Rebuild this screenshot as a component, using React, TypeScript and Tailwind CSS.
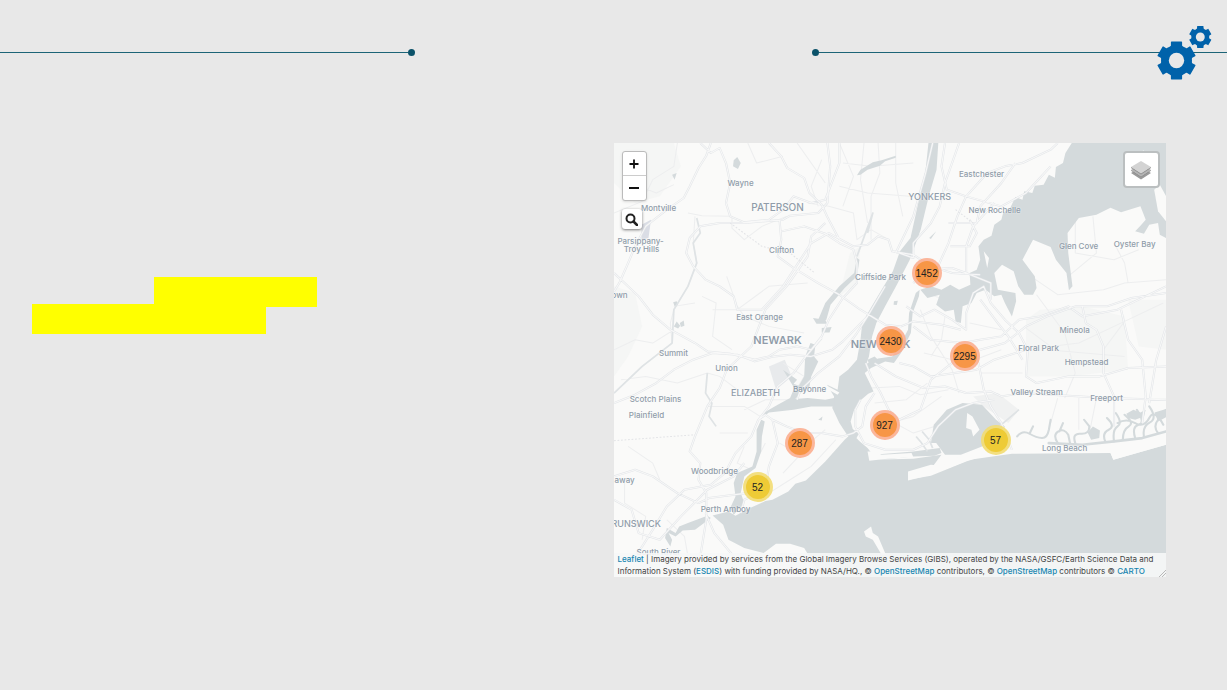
import React from "react";

type Label = { text: string; x: number; y: number; size: "sm" | "md" | "lg" | "xl"; edge?: boolean };
type Cluster = { count: number; x: number; y: number };

const MAP_W = 552;
const MAP_H = 434;

const labels: Label[] = [
  { text: "Wayne", x: 127, y: 40, size: "sm" },
  { text: "Montville", x: 45, y: 65, size: "sm" },
  { text: "PATERSON", x: 164, y: 64, size: "lg" },
  { text: "Parsippany-", x: 27, y: 98, size: "sm" },
  { text: "Troy Hills", x: 28, y: 106, size: "sm" },
  { text: "Clifton", x: 168, y: 107, size: "sm" },
  { text: "Eastchester", x: 368, y: 31, size: "sm" },
  { text: "YONKERS", x: 316, y: 53, size: "md" },
  { text: "New Rochelle", x: 381, y: 67, size: "sm" },
  { text: "Glen Cove", x: 465, y: 103, size: "sm" },
  { text: "Oyster Bay", x: 521, y: 101, size: "sm" },
  { text: "Cliffside Park", x: 267, y: 134, size: "sm" },
  { text: "own", x: -2, y: 152, size: "sm", edge: true },
  { text: "East Orange", x: 146, y: 174, size: "sm" },
  { text: "NEWARK", x: 164, y: 197, size: "xl" },
  { text: "NEW YORK", x: 267, y: 201, size: "xl" },
  { text: "Summit", x: 60, y: 210, size: "sm" },
  { text: "Union", x: 113, y: 225, size: "sm" },
  { text: "ELIZABETH", x: 142, y: 249, size: "md" },
  { text: "Bayonne", x: 196, y: 246, size: "sm" },
  { text: "Scotch Plains", x: 42, y: 256, size: "sm" },
  { text: "Plainfield", x: 33, y: 272, size: "sm" },
  { text: "Mineola", x: 461, y: 187, size: "sm" },
  { text: "Floral Park", x: 425, y: 205, size: "sm" },
  { text: "Hempstead", x: 473, y: 219, size: "sm" },
  { text: "Valley Stream", x: 423, y: 249, size: "sm" },
  { text: "Freeport", x: 493, y: 255, size: "sm" },
  { text: "Long Beach", x: 451, y: 305, size: "sm" },
  { text: "Woodbridge", x: 101, y: 328, size: "sm" },
  { text: "away", x: 1, y: 337, size: "sm", edge: true },
  { text: "Perth Amboy", x: 112, y: 366, size: "sm" },
  { text: "RUNSWICK", x: -2, y: 380, size: "md", edge: true },
  { text: "South River", x: 45, y: 409, size: "sm" },
];

const clusters: Cluster[] = [
  { count: 1452, x: 313, y: 130 },
  { count: 2430, x: 277, y: 198 },
  { count: 2295, x: 351, y: 213 },
  { count: 927, x: 271, y: 282 },
  { count: 287, x: 186, y: 300 },
  { count: 57, x: 382, y: 297 },
  { count: 52, x: 144, y: 344 },
];

const labelSize = {
  sm: "text-[8px] font-medium",
  md: "text-[9px] font-medium",
  lg: "text-[10px] font-medium",
  xl: "text-[11px] font-semibold",
};

const place = (x: number, y: number) => ({
  left: `${(x / MAP_W) * 100}%`,
  top: `${(y / MAP_H) * 100}%`,
});

const highways = [
  "M275 0L262 38L240 75L215 130L198 165L150 200L90 250L60 310L40 360L15 420L0 445",
  "M245 0L275 30L300 15L318 60L330 120L318 180L330 220L370 238L440 230L480 200L510 160L560 180L600 170L640 60L640 0",
  "M440 0L475 40L492 75L540 105L555 150L590 185L605 220L640 290",
  "M606 0L614 70L606 180L580 210L500 218L480 230L370 240L300 240L245 250L215 285L205 330L225 370L260 410L300 430L340 460L350 500L420 500L480 430L560 300L610 270L680 310L720 305L750 280L780 290L790 325L850 335L900 370L960 390L1040 395",
  "M470 230L475 290L465 340L510 375L580 420L640 455L700 500L770 545L815 550L850 535L930 545L985 560",
  "M475 265L540 250L600 272L640 300L680 320L690 360L690 420L650 465L610 530L590 580L560 620L520 610L470 620L440 640L400 650L330 632L265 625L230 600L160 560L110 515L70 460L0 390",
  "M0 780L60 755L120 720L170 680L225 650L280 630L350 635L400 655L455 640L500 635L560 640L620 620L650 595L720 520L770 430",
  "M590 585L545 640L510 690L465 730L440 790L410 830L390 880L345 930L315 990L275 1025L200 1040L150 1090L110 1160L80 1210L60 1240",
  "M245 1240L262 1130L262 1050L240 1010L245 960L215 925L230 880L265 790L300 735L320 680L390 610L430 500L490 430L550 340L560 280L600 240",
  "M0 1000L60 980L110 1000L180 1050L240 1080L270 1065L380 1050",
  "M280 1240L350 1310M260 1110L285 1170L340 1240",
  "M0 1070L50 1100L70 1170L130 1190L190 1120L265 1040L340 1000L370 960",
  "M410 830L430 815L450 830L490 850L540 870L590 870L650 880L680 870L705 850L715 790L740 750",
  "M450 830L465 900L440 970L430 1040L370 1070L360 1110",
  "M520 770L530 740L580 690L640 640L690 570L720 520",
  "M700 770L685 800L685 850L710 900L770 920L850 920L890 900L920 850L970 800L1020 780L1080 770",
  "M715 660L730 700L755 745L780 800L810 830L870 800L900 710L960 660L1000 640L1040 620L1110 600L1170 550L1230 520L1310 490L1400 490L1470 465L1568 450",
  "M740 660L800 700L880 735L940 730L1000 750L1070 745L1100 760L1160 750L1240 755L1400 765L1568 770",
  "M810 330L850 345L850 300L900 240L925 190L940 120L960 60L980 0",
  "M850 550L900 590L990 600L1040 590L1100 580L1150 530L1210 520L1290 490L1330 520L1430 500L1568 430",
  "M830 490L870 520L910 500L960 530L1000 560L1000 510L1020 450L1050 430L1070 480L1110 530L1150 570L1175 620L1170 700L1200 720L1290 700L1380 700L1460 675L1568 670",
  "M850 420L880 380L960 375L1000 390L1070 420L1070 470",
  "M860 420L920 370L950 300L975 220L1000 160L1060 90L1110 70L1160 60L1240 20L1260 0",
  "M905 0L885 90L850 220L800 330",
  "M940 0L930 70L945 140L1000 160L1100 190L1170 150L1240 70",
  "M950 240L1030 240L1040 190L1100 120L1140 60",
  "M955 310L1010 310L1030 270L1010 230",
  "M1000 390L1000 310L1020 250L1080 180",
  "M1330 490L1340 540L1370 560L1390 610L1390 690L1420 760L1420 850",
  "M1440 500L1460 590L1500 650L1510 760L1500 840",
  "M1568 550L1540 650L1520 780",
  "M1000 600L1035 660L1050 740L1070 790L1100 840L1130 920",
  "M1170 620L1080 650L1030 680L900 700L850 670L810 660",
  "M1040 470L1090 540L1120 580L1160 650",
];

const minorRoads = [
  "M50 120L120 150L170 125M0 210L80 175L110 110L170 70L180 0",
  "M210 210L250 218L335 220L335 255L370 290L420 250L490 220",
  "M230 220L225 300L235 360L210 430L170 500L160 540L165 600L80 670L0 750",
  "M550 180L610 190L680 210L690 290L730 260L780 290",
  "M640 0L680 100L650 190M710 0L700 110L720 240",
  "M320 400L350 490L370 520L440 550L540 570",
  "M250 460L290 480L280 580L335 620M280 500L350 500L440 430L550 420",
  "M265 790L370 790L415 820M170 490L230 480",
  "M20 710L90 700L180 720L265 690L300 700L350 740",
  "M0 620L60 590L110 600L170 560M40 910L110 960L130 1010",
  "M370 800L430 770L500 770L540 700L480 660",
  "M370 910L350 960L390 980L430 900M300 870L380 870",
  "M30 1010L30 1080L90 1120L80 1190M150 1130L200 1180L210 1240",
  "M730 735L810 730L870 755L950 740M740 780L830 770L890 720",
  "M780 830L850 870L910 850M750 850L850 820L930 760",
  "M910 460L990 480M1010 540L1100 560M880 630L1000 660L1100 620",
  "M1200 455L1280 570L1310 690L1280 765M1230 620L1450 640",
  "M1170 555L1240 610L1320 600L1450 535M1040 690L1160 690",
  "M1260 765L1240 840M1320 765L1320 860M1370 765L1350 870",
  "M1560 480L1450 535L1390 620M1310 230L1310 330L1420 350L1490 320",
  "M590 50L560 130L580 190M380 0L405 60L480 40M520 0L600 120",
  "M470 900L520 930L600 860M630 890L560 970L500 1010L440 1050M480 990L560 900",
  "M1170 390L1260 455L1390 440L1450 420L1568 410",
  "M1460 420L1450 360L1420 300M1360 220L1370 330L1290 400",
  "M750 0L755 90L730 160L730 290M800 0L800 120L820 220",
  "M640 130L720 150L840 160M650 60L730 70L850 60",
  "M870 500L900 580L960 680L980 750M940 520L930 590L900 640",
];

const highwayPath = highways.join("");
const minorPath = minorRoads.join("");

function Gear({ cx, cy, r }: { cx: number; cy: number; r: number }) {
  return (
    <g transform={`translate(${cx} ${cy}) scale(${r / 19})`}>
      <circle r="15.500" fill="#0062aa" />
      {[0, 60, 120, 180, 240, 300].map((angle) => (
        <path key={angle} d="M-7 -12L-5.6 -15V-18.3Q-5.6 -19 -4.9 -19H4.9Q5.6 -19 5.6 -18.3V-15L7 -12Z" fill="#0062aa" transform={`rotate(${angle})`} />
      ))}
      <circle r="7.7" fill="#e8e8e8" />
    </g>
  );
}

function BaseMap() {
  return (
    <svg className="block h-full w-full" viewBox="0 0 1568 1302" preserveAspectRatio="none" aria-hidden="true">
      <rect width="1568" height="1302" fill="#fafaf9" />
      <g fill="#f5f6f5">
        <path d="M0 0H170L190 70L130 160L60 180L0 120Z" />
        <path d="M0 430L60 450L80 550L40 640L0 700Z" />
        <path d="M1170 530L1210 500L1330 490L1450 520L1460 680L1290 700L1170 700Z" />
        <path d="M1460 470H1568V620L1490 610Z" />
        <path d="M440 670L485 650L505 700L460 740Z" fill="#e8eaec" />
        <path d="M1020 760L1090 750L1150 800L1120 840L1050 790Z" fill="#f0f1f1" />
        <path d="M670 330L700 310L690 420L640 460Z" />
      </g>
      <path d={minorPath} fill="none" stroke="#edeeef" strokeWidth="3" strokeLinejoin="round" />
      <g fill="#d4dadc">
        <path d="M893 0H921L916 80L895 155L871 260L840 350L801 430L770 490L745 540L733 580L724 640L717 662L750 646L790 640L815 600L835 560L838 510L857 450L868 440L866 460L848 510L843 570L815 630L795 660L770 655L730 675L712 690L726 720L737 745L722 752L702 770L682 800L672 835L678 858L695 872L688 886L720 915L735 935L850 925L925 915L930 930L910 938L850 940L725 953L720 940L690 900L665 880L640 840L620 795L625 760L605 725L635 740L640 700L665 680L690 650L700 590L705 540L732 490L760 440L792 385L812 325L842 285L862 190L885 80Z" />
        <path d="M480 680L520 710L510 722L525 728L540 700L543 640L558 600L572 605L568 640L580 655L560 700L555 730L530 750L515 768L550 765L600 770L625 765V790L560 790L510 800L440 808L425 820L420 812L465 785L500 765L512 735Z" />
        <path d="M405 860L418 830L428 835L420 880L418 925L402 975L370 1000L360 1050L370 1080L340 1115L330 1095L345 1060L340 1020L350 990L393 970L405 925Z" />
        <path d="M665 880L690 886L715 925L730 950L850 947L930 935L905 970L835 1010L900 998L1000 955L1060 935L1130 930L1230 928L1410 930L1418 950L1500 925L1568 905V1302H590L540 1215L500 1202L460 1202L425 1230L370 1215L325 1190L310 1145L280 1117L325 1105L345 1118L380 1098L430 1074L450 1070L495 1045L515 1022L545 1012L600 955L655 890Z" />
        <path d="M900 900L908 845L945 800L990 780L1045 785L1085 830L1110 850L1090 885L1045 910L985 935L940 935L915 900Z" />
        <path d="M1300 0L1282 30L1275 60L1255 72L1252 104L1235 95L1220 125L1195 128L1188 150L1165 145L1160 170L1140 162L1125 195L1105 210L1100 230L1080 245L1072 278L1050 290L1035 310L1040 350L1030 380L1010 390L1012 425L980 440L955 425L930 440L900 430L870 440L890 465L925 455L915 485L940 505L965 500L970 535L985 540L990 490L1015 480L1030 450L1055 440L1080 460L1100 455L1110 480L1130 520L1142 475L1140 450L1090 440L1080 390L1102 365L1135 385L1148 430L1165 455L1190 455L1200 435L1195 400L1160 350L1190 290L1240 312L1255 350L1285 390L1292 442L1302 430L1290 330L1288 270L1320 225L1370 215L1410 194L1440 208L1495 190L1510 230L1495 248L1480 265L1505 272L1520 245L1545 240L1550 275L1568 285V0Z" />
        <path d="M600 480L640 430L682 390L690 345L697 350L690 400L655 435L615 485L603 530L590 540L580 530ZM565 525L600 530L605 542L575 542ZM590 555L618 552L612 568L590 568Z" />
        <path d="M265 1118L210 1140L185 1150L175 1170L150 1155L145 1185L160 1210L165 1190L155 1170L175 1180L195 1162L230 1160L275 1125Z" />
        <path d="M690 97L700 80L735 58L760 52L800 38L800 44L770 55L755 68L720 80L700 95ZM340 52L350 42L360 60L352 78L338 70Z" />
        <path d="M170 550L178 535L188 548L182 556ZM187 540L198 532L200 548L190 552ZM165 95L178 90L172 110ZM895 285L915 265L900 288ZM168 478L178 475L182 485L172 490ZM795 475L806 473L803 486L794 485ZM580 830L592 820L590 832Z" />
        <path d="M720 650L740 640L750 650L725 665ZM725 735L712 715L722 715Z" />
      </g>
      <path d="M78 245L105 230L98 285L78 290Z" fill="#dadde5" />
      <g fill="#fafaf9">
        <path d="M1534 140L1550 125L1568 160V235L1545 205Z" />
        <path d="M1003 810L1018 820L1038 860L1020 880L1015 860L1000 855Z" />
        <path d="M835 985L900 965L930 968L980 940L1060 912L1150 905L1440 900L1568 870V905L1500 925L1418 950L1410 930L1130 932L1010 950L900 995L835 1012Z" />
        <path d="M720 925L740 925L760 935L845 930L850 942L770 948L725 953Z" />
        <path d="M710 1165L730 1150L735 1170L750 1180L760 1205L772 1235H760L735 1190L715 1180Z" />
        <path d="M1050 325L1065 345L1060 375ZM1080 220L1090 225L1082 240ZM1480 35L1505 22L1500 35Z" />
        <path d="M600 725L640 748L635 755L600 735ZM610 700L632 715L628 720L605 708Z" />
      </g>
      <g fill="none" stroke="#d4dadc" strokeLinejoin="round" strokeLinecap="round">
        <path d="M1235 900L1330 905L1420 895L1500 885L1568 865" strokeWidth="8" />
        <path d="M1145 880Q1160 860 1180 872T1215 885T1235 860L1240 830M1260 900Q1245 875 1262 865T1290 875L1295 900M1310 900Q1300 870 1325 872T1350 850L1335 830M1395 895Q1385 870 1405 860T1400 825M1420 895Q1415 860 1430 850T1425 810M1445 890Q1445 860 1462 850T1450 815M1480 885Q1470 850 1490 845T1485 800M1505 880Q1500 850 1522 838T1520 790M1545 870Q1530 850 1545 830T1568 800M1430 840Q1455 825 1480 840T1520 825T1560 845M1180 872L1190 850M1265 865L1275 840" strokeWidth="6" />
      </g>
      <path d="M1455 812L1475 800L1495 808L1510 800L1505 820L1480 830L1460 825ZM1345 868L1360 850L1380 862L1378 885L1355 890ZM1535 808L1568 798V822L1545 835Z" fill="#d4dadc" />
      <path d="M265 690L260 750L278 780L270 820L290 850M690 340L735 210L720 270M1150 800L1100 845L1085 865M858 880L870 895L890 925M875 865L895 890L905 915M235 225L245 270L225 300L235 360L210 430L170 500L165 600L80 670L0 750" fill="none" stroke="#dfe3e5" strokeWidth="5" strokeLinejoin="round" />
      <path d={highwayPath} fill="none" stroke="#e2e5e8" strokeWidth="6" strokeLinejoin="round" />
      <path d={highwayPath} fill="none" stroke="#f8f8f8" strokeWidth="3" strokeLinejoin="round" />
      <path d="M0 893L230 875M330 240L420 310L500 330L570 390M970 200L1020 240" fill="none" stroke="#e2e3e6" strokeWidth="3" strokeDasharray="5 5" />
    </svg>
  );
}

function LayersIcon() {
  return (
    <svg className="size-[26px]" viewBox="0 0 26 26" aria-hidden="true">
      <path d="M3 16L13 22.500L23 16L20.500 14.500L13 19.500L5.500 14.500Z" fill="#9a9a9a" />
      <path d="M3 13L13 19.500L23 13L20.500 11.500L13 16.500L5.500 11.500Z" fill="#b4b4b4" />
      <path d="M3 13L13 19.500L23 13V13.800L13 20.200L3 13.800Z" fill="#8b8b8b" />
      <path d="M3 10L13 16.500L23 10L13 4Z" fill="#d3d3d3" />
      <path d="M3 10L13 16.500L23 10V11L13 17.500L3 11Z" fill="#929292" />
    </svg>
  );
}

function MapPanel() {
  const link = "font-medium text-[#1685b0]";
  return (
    <section aria-label="Map" className="relative aspect-[552/434] w-[90%] overflow-hidden">
      <BaseMap />
      {labels.map((l) => (
        <span
          key={l.text}
          className={`absolute -translate-y-1/2 whitespace-nowrap leading-none text-[#909ca9] [text-shadow:0_0_2px_#fff] ${l.edge ? "" : "-translate-x-1/2"} ${labelSize[l.size]}`}
          style={place(l.x, l.y)}
        >
          {l.text}
        </span>
      ))}
      {clusters.map((c) => (
        <button
          key={c.count}
          type="button"
          className={`absolute flex size-[30px] -translate-x-1/2 -translate-y-1/2 items-center justify-center rounded-full ${c.count < 100 ? "bg-[#f2dc72]/90" : "bg-[#fbae90]/90"}`}
          style={place(c.x, c.y)}
        >
          <span className={`flex size-6 items-center justify-center rounded-full font-['Liberation_Sans',sans-serif] text-[10px] text-[#222] ${c.count < 100 ? "bg-[#eecb36]" : "bg-[#f79646]"}`}>
            {c.count}
          </span>
        </button>
      ))}
      <div className="absolute left-2 top-2 flex flex-col items-start gap-2">
        <div className="flex w-[25px] flex-col overflow-hidden rounded-[3px] border border-[#bbb] bg-white shadow-sm">
          <button type="button" aria-label="Zoom in" className="flex h-6 items-center justify-center border-b border-[#ccc]">
            <svg className="size-[10px]" viewBox="0 0 10 10" aria-hidden="true"><path d="M5 .5V9.500M.5 5H9.500" stroke="#111" strokeWidth="1.800" /></svg>
          </button>
          <button type="button" aria-label="Zoom out" className="flex h-6 items-center justify-center">
            <svg className="size-[10px]" viewBox="0 0 10 10" aria-hidden="true"><path d="M0 5H10" stroke="#111" strokeWidth="1.800" /></svg>
          </button>
        </div>
        <button type="button" aria-label="Search" className="flex size-[20px] items-center justify-center rounded-[3px] bg-white shadow-[0_1px_3px_#777]">
          <svg className="size-[13px]" viewBox="0 0 13 13" fill="none" stroke="#222" aria-hidden="true">
            <circle cx="5.500" cy="5.500" r="4" strokeWidth="2" />
            <path d="M8.500 8.500L12 12" strokeWidth="2.500" strokeLinecap="round" />
          </svg>
        </button>
      </div>
      <button type="button" aria-label="Layers" className="absolute right-[6px] top-2 flex h-[37px] w-[37px] items-center justify-center rounded-[4px] border-2 border-[#bbbfc0] bg-white">
        <LayersIcon />
      </button>
      <p className="absolute inset-x-0 bottom-0 bg-[#f6f7f7]/90 pl-1 text-[8px] leading-3 text-[#444]">
        <a href="#leaflet" className={link}>Leaflet</a> | Imagery provided by services from the Global Imagery Browse Services (GIBS), operated by the NASA/GSFC/Earth Science Data and Information System (<a href="#esdis" className={link}>ESDIS</a>) with funding provided by NASA/HQ., © <a href="#osm" className={link}>OpenStreetMap</a> contributors, © <a href="#osm" className={link}>OpenStreetMap</a> contributors © <a href="#carto" className={link}>CARTO</a>
      </p>
      <svg className="absolute bottom-0 right-0 size-2" viewBox="0 0 8 8" aria-hidden="true"><path d="M1 8L8 1M4 8L8 4" stroke="#aaa" strokeWidth=".8" /></svg>
    </section>
  );
}

export default function App() {
  return (
    <div className="min-h-screen bg-[#e8e8e8] font-[Inter,sans-serif]">
      <header className="relative flex h-[105px] items-center justify-between">
        <div className="flex w-[33.8%] items-center">
          <div className="h-px flex-1 bg-[#1c6477]" />
          <div className="size-[7px] rounded-full bg-[#0b5269]" />
        </div>
        <div className="flex w-[33.8%] items-center">
          <div className="size-[7px] rounded-full bg-[#0b5269]" />
          <div className="h-px flex-1 bg-[#1c6477]" />
        </div>
        <svg className="absolute right-3 top-6 h-[60px] w-[60px]" viewBox="0 0 60 60" aria-hidden="true">
          <Gear cx={21.5} cy={36.5} r={19} />
          <Gear cx={45.3} cy={13} r={11} />
        </svg>
      </header>
      <main className="grid grid-cols-2 pt-[38px]">
        <div className="flex flex-col pl-8 pt-[134px]">
          <div className="ml-[122px] h-[30px] w-[163px] bg-[#ffff00]" />
          <div className="-mt-[3px] h-[30px] w-[234px] bg-[#ffff00]" />
        </div>
        <MapPanel />
      </main>
    </div>
  );
}
